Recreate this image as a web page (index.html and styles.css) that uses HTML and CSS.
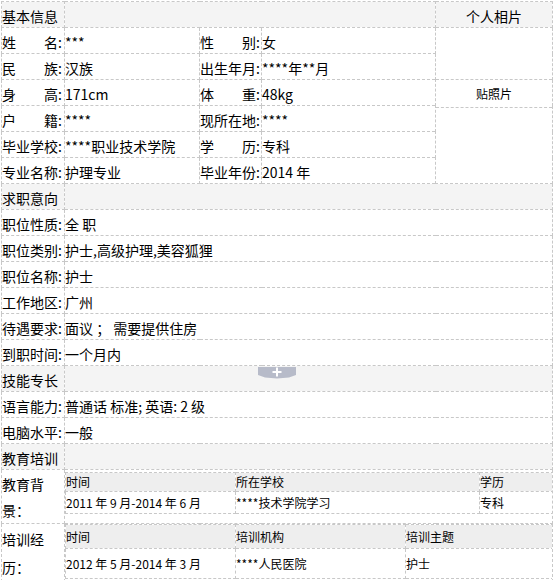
FILE: index.html
```html
<!DOCTYPE html>
<html lang="zh-CN">
<head>
<meta charset="utf-8">
<title>个人简历</title>
<link rel="stylesheet" href="styles.css">
</head>
<body>
<div class="page">
<table class="resume">
  <colgroup><col class="c1"><col class="c2"><col class="c3"><col class="c4"><col class="c5"></colgroup>
  <tr class="sec"><td>基本信息</td><td colspan="3"></td><td class="center">个人相片</td></tr>
  <tr><td>姓　　名:</td><td>***</td><td>性　　别:</td><td>女</td>
    <td rowspan="6" class="photo">
      <div class="ph-top"></div>
      <div class="ph-mid">贴照片</div>
      <div class="ph-bot"></div>
    </td></tr>
  <tr><td>民　　族:</td><td>汉族</td><td>出生年月:</td><td>****年**月</td></tr>
  <tr><td>身　　高:</td><td>171cm</td><td>体　　重:</td><td>48kg</td></tr>
  <tr><td>户　　籍:</td><td>****</td><td>现所在地:</td><td>****</td></tr>
  <tr><td>毕业学校:</td><td>****职业技术学院</td><td>学　　历:</td><td>专科</td></tr>
  <tr><td>专业名称:</td><td>护理专业</td><td>毕业年份:</td><td>2014 年</td></tr>

  <tr class="sec"><td>求职意向</td><td colspan="4"></td></tr>
  <tr><td>职位性质:</td><td colspan="4">全 职</td></tr>
  <tr><td>职位类别:</td><td colspan="4">护士,高级护理,美容狐狸</td></tr>
  <tr><td>职位名称:</td><td colspan="4">护士</td></tr>
  <tr><td>工作地区:</td><td colspan="4">广州</td></tr>
  <tr><td>待遇要求:</td><td colspan="4">面议 ； 需要提供住房</td></tr>
  <tr><td>到职时间:</td><td colspan="4">一个月内</td></tr>

  <tr class="sec"><td>技能专长</td><td colspan="4" class="tab-cell"><span class="tab"><svg width="38" height="12" viewBox="0 0 38 12"><polygon points="0,0 38,0 38,8 31,10.5 19,11.5 7,10.5 0,8" fill="#b7bbc9"/><rect x="14.5" y="4" width="9" height="2" fill="#fff"/><rect x="18" y="0.5" width="2" height="9" fill="#fff"/></svg></span></td></tr>
  <tr><td>语言能力:</td><td colspan="4">普通话 标准; 英语: 2 级</td></tr>
  <tr><td>电脑水平:</td><td colspan="4">一般</td></tr>

  <tr class="sec"><td>教育培训</td><td colspan="4"></td></tr>
  <tr class="edu"><td class="wrap">教育背景：</td>
    <td colspan="4" class="inner-cell">
      <table class="inner inner-edu">
        <colgroup><col class="e1"><col class="e2"><col class="e3"></colgroup>
        <tr class="ih"><td>时间</td><td>所在学校</td><td>学历</td></tr>
        <tr class="id"><td>2011 年 9 月-2014 年 6 月</td><td>****技术学院学习</td><td>专科</td></tr>
      </table>
    </td></tr>
  <tr class="train"><td class="wrap">培训经历：</td>
    <td colspan="4" class="inner-cell">
      <table class="inner inner-train">
        <colgroup><col class="t1"><col class="t2"><col class="t3"></colgroup>
        <tr class="ih"><td>时间</td><td>培训机构</td><td>培训主题</td></tr>
        <tr class="id"><td>2012 年 5 月-2014 年 3 月</td><td>****人民医院</td><td>护士</td></tr>
      </table>
    </td></tr>
</table>
</div>
</body>
</html>
```

FILE: styles.css
```css
html, body {
  margin: 0;
  background: #fff;
}
body {
  font-family: "Noto Sans CJK SC", "Noto Sans", sans-serif;
  font-size: 14px;
  color: #000;
}
.page {
  padding: 1px 0 0 1px;
}
.resume {
  border-collapse: collapse;
  table-layout: fixed;
  width: 552px;
}
.c1 { width: 63px; }
.c2 { width: 135px; }
.c3 { width: 62px; }
.c4 { width: 174px; }
.c5 { width: 117px; }

.resume td {
  border: 1px dashed #c8c8c8;
  padding: 2px 0 0 0;
  height: 26px;
  box-sizing: border-box;
  line-height: 20px;
  vertical-align: middle;
  white-space: nowrap;
  overflow: hidden;
}
.resume .sec td {
  background: #f4f4f4;
}
.resume td.center {
  text-align: center;
}
.resume td.photo {
  padding: 0;
  vertical-align: top;
  background: #fff;
}
.ph-top {
  height: 51px;
}
.ph-mid {
  height: 27px;
  border-top: 1px dashed #c8c8c8;
  border-bottom: 1px dashed #c8c8c8;
  text-align: center;
  font-size: 12px;
  line-height: 27px;
}
.resume td.tab-cell {
  vertical-align: top;
  padding: 1px 0 0 193px;
  line-height: 0;
}
.tab {
  display: inline-block;
  line-height: 0;
}
.resume td.wrap {
  white-space: normal;
  padding: 1px 0 0 0;
}
.edu td.wrap {
  height: 54px;
  line-height: 26px;
}
.train td.wrap {
  height: 55px;
  line-height: 28px;
}
.resume td.inner-cell {
  padding: 0;
  vertical-align: top;
}

.inner {
  border-collapse: collapse;
  table-layout: fixed;
  width: 488px;
  font-size: 12px;
}
.inner-edu {
  margin-top: 2px;
}
.e1 { width: 170px; }
.e2 { width: 244px; }
.e3 { width: 74px; }
.t1 { width: 170px; }
.t2 { width: 170px; }
.t3 { width: 148px; }

.resume .inner td {
  border: 1px dashed #c8c8c8;
  padding: 0;
  line-height: 16px;
  vertical-align: middle;
}
.resume .inner .ih td {
  background: #eeeeee;
}
.inner-edu .ih td { height: 19px; }
.inner-edu .id td { height: 22px; }
.inner-train .ih td { height: 24px; }
.inner-train .id td { height: 30px; }
```
